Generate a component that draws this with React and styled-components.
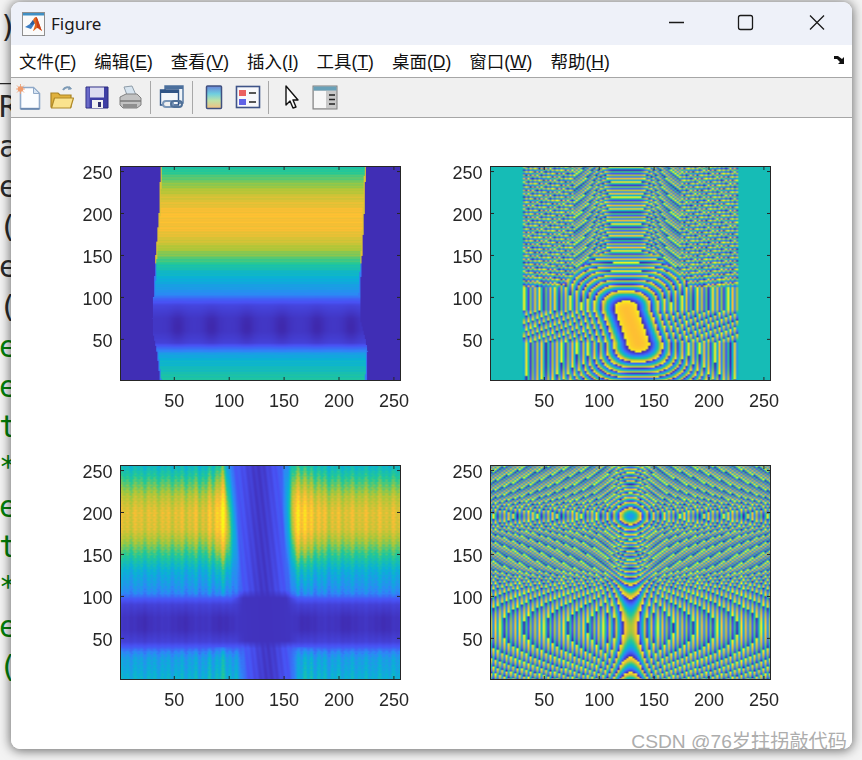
import { useEffect, useRef } from "react";
import styled, { createGlobalStyle } from "styled-components";

const GlobalStyle = createGlobalStyle`
  html, body {
    margin: 0;
    padding: 0;
    background: #f3f3f3;
  }
`;

const Desktop = styled.div`
  position: relative;
  width: 862px;
  height: 760px;
  overflow: hidden;
  background: #f3f3f3;
`;

const CodeBehind = styled.div`
  padding-top: 7px;
  margin-left: -1px;
  font-family: "DejaVu Sans Mono", monospace;
  font-size: 30px;
  line-height: 40px;
`;

const CodeLine = styled.div`
  height: 40px;
  color: ${(p) => (p.$comment ? "#028009" : "#2a2a2a")};
`;

const Window = styled.div`
  position: absolute;
  left: 11px;
  top: 2px;
  width: 841px;
  height: 747px;
  display: flex;
  flex-direction: column;
  border-radius: 9px;
  overflow: hidden;
  background: #fff;
  box-shadow: 0 1px 11px 1px rgba(0, 0, 0, 0.55);
`;

const TitleBar = styled.div`
  height: 43px;
  flex: none;
  display: flex;
  align-items: center;
  background: #eef1f9;
  padding-left: 11px;
`;

const Title = styled.span`
  margin-left: 6px;
  font-family: "Noto Sans", sans-serif;
  font-size: 17px;
  color: #1a1a1a;
`;

const WindowButtons = styled.div`
  margin-left: auto;
  display: flex;
`;

const WindowButton = styled.svg`
  width: 71px;
  height: 43px;
  display: block;
  fill: none;
  stroke: #1a1a1a;
  stroke-width: 1.3;
`;

const MenuBar = styled.div`
  height: 33px;
  flex: none;
  box-sizing: border-box;
  display: flex;
  align-items: center;
  gap: 18px;
  padding: 0 6px 2px 8px;
  background: #fff;
  border-bottom: 1px solid #a6a6a6;
  font-family: "Liberation Sans", "Noto Sans CJK SC", sans-serif;
  font-size: 17.5px;
  color: #111;
`;

const MenuItem = styled.span`
  white-space: nowrap;
`;

const DockArrow = styled.svg`
  margin-left: auto;
  width: 12px;
  height: 10px;
`;

const Toolbar = styled.div`
  height: 40px;
  flex: none;
  box-sizing: border-box;
  display: flex;
  align-items: center;
  background: #f0f0f0;
  border-bottom: 1px solid #a6a6a6;
  padding-left: 1px;
`;

const ToolButton = styled.div`
  width: ${(p) => p.$w || 34}px;
  display: flex;
  justify-content: center;
`;

const ToolIcon = styled.svg`
  width: 26px;
  height: 27px;
  display: block;
`;

const ToolSep = styled.div`
  width: 1px;
  height: 33px;
  background: #a8a8a8;
  margin: 0 ${(p) => p.$r || 4}px 0 ${(p) => p.$l || 2}px;
`;

const FigureArea = styled.div`
  flex: 1;
  display: grid;
  grid-template-columns: 281px 281px;
  grid-template-rows: 215px 215px;
  column-gap: 89px;
  row-gap: 84px;
  padding: 48px 0 0 109px;
  background: #fff;
`;

const Plot = styled.div`
  position: relative;
  width: 281px;
  height: 215px;
`;

const HeatCanvas = styled.canvas`
  width: 281px;
  height: 215px;
  display: block;
`;

const AxesOverlay = styled.svg`
  position: absolute;
  left: 0;
  top: 0;
  overflow: visible;
  font-family: "Liberation Sans", Arial, sans-serif;
  font-size: 18px;
  fill: #262626;
`;

const Watermark = styled.div`
  position: absolute;
  right: 15px;
  bottom: 7px;
  font-family: "Liberation Sans", "Noto Sans CJK SC", sans-serif;
  font-size: 19.2px;
  line-height: 22px;
  color: #adadad;
  white-space: nowrap;
`;

// parula colormap stops
const PARULA = [
  [62, 38, 168],
  [72, 82, 244],
  [46, 135, 247],
  [10, 177, 214],
  [35, 200, 151],
  [171, 199, 57],
  [254, 190, 52],
  [249, 251, 21],
];

function parula(t) {
  const v = Math.min(0.9999, Math.max(0, t)) * (PARULA.length - 1);
  const i = Math.floor(v);
  const f = v - i;
  return PARULA[i].map((c, k) => c + (PARULA[i + 1][k] - c) * f);
}

function lerpTable(table, x) {
  if (x <= table[0][0]) return table[0][1];
  for (let i = 1; i < table.length; i++) {
    if (x <= table[i][0]) {
      const [x0, y0] = table[i - 1];
      const [x1, y1] = table[i];
      return y0 + ((y1 - y0) * (x - x0)) / (x1 - x0);
    }
  }
  return table[table.length - 1][1];
}

const gauss = (d, s) => Math.exp(-(d * d) / (2 * s * s));
const wrap = (phi) => phi - Math.floor(phi);
const clamp01 = (v) => Math.max(0, Math.min(1, v));

// phase whose slope grows from 0 and levels off at `slope`, so it never aliases
const chirp = (d, slope, s) => slope * s * Math.log(Math.cosh(d / s));

const PROFILE_A = [
  [1, 0.56], [12, 0.5], [25, 0.44], [33, 0.36], [40, 0.2], [46, 0.09], [60, 0.055], [75, 0.055],
  [90, 0.1], [97, 0.17], [104, 0.3], [115, 0.38], [130, 0.47], [150, 0.66], [165, 0.77], [180, 0.84],
  [200, 0.855], [220, 0.78], [235, 0.68], [256, 0.53],
];

const EDGE_L = [[1, 37], [36, 34], [55, 31], [75, 30], [100, 31], [150, 33], [200, 36], [256, 37.5]];
const EDGE_R = [[1, 225], [36, 226], [50, 224], [75, 219], [100, 219], [150, 221], [200, 223], [256, 224.5]];

// amplitude with dark side bands
function fieldA(x, y) {
  const l = lerpTable(EDGE_L, y);
  const r = lerpTable(EDGE_R, y);
  if (x < l || x > r) return 0.025;
  let v = lerpTable(PROFILE_A, y);
  const stripes = clamp01(v * 3 - 0.2);
  v += stripes * (0.016 * Math.sin(y * 1.9) + 0.01 * Math.sin(y * 0.8 + 1));
  for (const c of [53, 84, 116, 148, 180, 211]) {
    v -= 0.045 * gauss(x - c, 5) * gauss(y - 65, 14);
  }
  const edge = Math.min(x - l, r - x);
  if (edge < 1.2) {
    if (y > 140) v = 0.8;
    else if (y > 100 || y < 40) v = 0.25;
  }
  return v;
}

const PROFILE_C = [
  [1, 0.44], [12, 0.4], [25, 0.37], [33, 0.29], [40, 0.16], [46, 0.09], [60, 0.05], [75, 0.05],
  [90, 0.09], [97, 0.16], [104, 0.29], [115, 0.35], [130, 0.42], [150, 0.58], [165, 0.7], [180, 0.79],
  [200, 0.81], [220, 0.73], [235, 0.62], [256, 0.46],
];

// amplitude with a slanted dark band down the middle
function fieldC(x, y) {
  let v = lerpTable(PROFILE_C, y);
  const lit = clamp01((y - 98) / 6) + clamp01((40 - y) / 6);
  const near = Math.max(gauss(x - 93, 22), gauss(x - 165, 22));
  const envelope = lit * (0.55 + 0.45 * near) + (1 - lit) * 0.08;
  v += envelope * (0.035 * Math.sin((x * 2 * Math.PI) / 13) + 0.05 * Math.sin((x * 2 * Math.PI) / 6.2));
  v += 0.012 * lit * Math.sin(y * 1.9);
  v += 0.018 * lit * Math.sin((y * 2 * Math.PI) / 5.5) * Math.sin((x * 2 * Math.PI) / 5.5);
  const up = clamp01((y - 105) / 50);
  const ridge = 0.13 * gauss(x - 92.5, 4.5) + 0.13 * gauss(x - 165, 4.5) + 0.05 * gauss(x - 178, 3.5);
  v += ridge * (y > 100 ? 0.3 + 0.7 * up : y < 40 ? 0.5 : 0);
  for (const c of [22, 58, 93, 170, 207, 240]) {
    v -= 0.025 * gauss(x - c, 6) * gauss(y - 68, 13);
  }
  const centre = 131 - (y - 128) * 0.04;
  const half = 25 + Math.max(0, y - 128) * 0.012;
  const mask = clamp01((half - Math.abs(x - centre)) / 11 + 0.5);
  const slant = Math.sin(((x + y * 0.09) * 2 * Math.PI) / 5.2);
  const core = 0.19 - 0.13 * gauss(x - centre, 11) + 0.015 * slant;
  const deep = 0.04 + 0.015 * (1 - gauss(x - centre, 22));
  const inBand = clamp01((y - 38) / 9) * clamp01((108 - y) / 10);
  const low = core * (1 - inBand) + deep * inBand;
  return v * (1 - mask) + low * mask;
}

// closed fringes round an S shaped core, teal outside the aperture
function fieldB(x, y) {
  if (x < 31 || x > 226) return 0.5;
  const top = 86;
  const bottom = 46;
  const yc = Math.max(bottom, Math.min(top, y));
  const xs = 124 + ((top - yc) / (top - bottom)) * 11;
  const dx = Math.abs(x - xs);
  const dy = Math.abs(y - yc);
  if (y > 112 + 38 * clamp01((60 - dx) / 30)) {
    // upper half: rows crossed by columns, which reads as a dense check
    const parity = ((x - 1) / 2) % 2;
    const sideways = chirp(Math.max(0, dx - 12), 0.23, 18);
    const rows = chirp(Math.max(0, dy - 5), 0.22, 28);
    return wrap(0.8825 + rows + sideways + (dx > 48 ? 0.25 * parity : 0));
  }
  const far = Math.max(dx, dy);
  const p = 2 + Math.min(far / 30, 3);
  const d = Math.pow(Math.pow(dx, p) + Math.pow(dy, p), 1 / p);
  const inner = Math.min(d, 5);
  return wrap(0.86 + 0.0009 * inner * inner + chirp(Math.max(0, d - 5), 0.22, 28));
}

// slope per cell of the vertical phase in the saddle panel
function saddleSlope(y) {
  if (y <= 105) return -0.005 * ((y - 62) / 2);
  if (y <= 135) return -0.1075 - ((y - 105) / 30) * 0.3125;
  return 0.42 * Math.tanh((y - 195) / 2 / 8);
}

const SADDLE = (() => {
  const table = [];
  let phase = 0;
  for (let y = 0; y <= 256; y += 2) {
    table[y] = phase;
    phase += saddleSlope(y);
  }
  return table;
})();

// vertical fringes low down, concentric diamonds higher up
function fieldD(x, y) {
  return wrap(chirp((x - 128) / 2, 0.45, 8) + SADDLE[y] + 0.23);
}

function Heatmap({ field, cells }) {
  const ref = useRef(null);

  useEffect(() => {
    const ctx = ref.current.getContext("2d");
    const image = ctx.createImageData(cells, cells);
    const step = 256 / cells;
    for (let j = 0; j < cells; j++) {
      for (let i = 0; i < cells; i++) {
        const [r, g, b] = parula(field(i * step + 1, 256 - j * step));
        const at = (j * cells + i) * 4;
        image.data[at] = r;
        image.data[at + 1] = g;
        image.data[at + 2] = b;
        image.data[at + 3] = 255;
      }
    }
    ctx.putImageData(image, 0, 0);
  }, [field, cells]);

  return <HeatCanvas ref={ref} width={cells} height={cells} />;
}

const TICKS = [50, 100, 150, 200, 250];

function Axes({ field, cells }) {
  const px = (v) => 0.5 + ((v - 1) * 280) / 255;
  const py = (v) => 214.5 - ((v - 1) * 214) / 255;
  return (
    <Plot>
      <Heatmap field={field} cells={cells} />
      <AxesOverlay width="281" height="215">
        <rect x="0.5" y="0.5" width="280" height="214" fill="none" stroke="#262626" />
        {TICKS.map((t) => (
          <g key={t}>
            <path d={`M${px(t)} 214V211M${px(t)} 1V4M1 ${py(t)}H4M280 ${py(t)}H277`} stroke="#262626" fill="none" />
            <text x={px(t)} y="240.5" textAnchor="middle">{t}</text>
            <text x="-7.5" y={py(t) + 7.5} textAnchor="end">{t}</text>
          </g>
        ))}
      </AxesOverlay>
    </Plot>
  );
}

const NAV = [
  ["文件", "F"],
  ["编辑", "E"],
  ["查看", "V"],
  ["插入", "I"],
  ["工具", "T"],
  ["桌面", "D"],
  ["窗口", "W"],
  ["帮助", "H"],
];

const CODE = [
  [")", 0], ["_", 0], ["R", 0], ["a", 0], ["e", 0], ["(", 0], ["e", 0], ["(", 0],
  ["e", 1], ["e", 1], ["t", 1], ["*", 1], ["e", 1], ["t", 1], ["*", 1], ["e", 1], ["(", 1],
];

function MatlabLogo() {
  return (
    <svg width="23" height="24" viewBox="0 0 23 24">
      <rect x="0.5" y="0.5" width="22" height="23" fill="#fafafa" stroke="#8f8f8f" />
      <rect x="1" y="1" width="21" height="2.5" fill="#3f8fc4" />
      <path d="M3 15l5-3 3-4 2 3-4 6z" fill="#3b7dc4" />
      <path d="M8 12l3-4 2 3-3 2z" fill="#2f5f9e" />
      <path d="M11 8c1-2 2-3 3-3 1.500 0 3 7 6 14-2-1-3-3-5-3-2 1-3 3-4 3 1-3 2-5 2-7z" fill="#e2661d" />
      <path d="M14 5c1.500 0 3 7 6 14-2-1-3-3-5-3 0-4-1-8-1-11z" fill="#c9401a" />
    </svg>
  );
}

function NewIcon() {
  return (
    <ToolIcon viewBox="0 0 26 27">
      <path d="M4.500 3.500h13l6 6v15H4.500z" fill="#fbfdff" stroke="#8fa9c8" strokeWidth="1.600" />
      <path d="M17.500 3.500v6h6z" fill="#d6e4f3" stroke="#8fa9c8" />
      <path d="M4.500 25h19" stroke="#5f7fa8" strokeWidth="1.500" />
      <circle cx="4.500" cy="5" r="2.800" fill="#ee9a6c" />
      <path d="M4.500 0v10M0 5h9M1 1.500l7 7M8 1.500l-7 7" stroke="#ee9a6c" strokeWidth="0.8" />
    </ToolIcon>
  );
}

function OpenIcon() {
  return (
    <ToolIcon viewBox="0 0 26 27">
      <path d="M13 6c2-3.500 6-3.500 8-1" fill="none" stroke="#7d9ab5" strokeWidth="2" />
      <path d="M19 2l3 3-4 1z" fill="#7d9ab5" />
      <path d="M1 23V9h7l2 2h11v12z" fill="#e0b13d" stroke="#a98324" strokeWidth="1.200" />
      <path d="M1.500 24l3-10h19l-3 10z" fill="#fbe38e" stroke="#b08a28" strokeWidth="1.200" strokeLinejoin="round" />
    </ToolIcon>
  );
}

function SaveIcon() {
  return (
    <ToolIcon viewBox="0 0 26 27">
      <path d="M2 3h22v21H2z" fill="#3f3fa5" stroke="#2a2a7c" />
      <path d="M2.500 3.500h3v20h-3z" fill="#6a6ac8" />
      <path d="M6 3.500h14v10H6z" fill="#dcdcf0" />
      <path d="M8 16h11v8H8z" fill="#f2f2f2" />
      <path d="M14 18h3v5h-3z" fill="#30306f" />
    </ToolIcon>
  );
}

function PrintIcon() {
  return (
    <ToolIcon viewBox="0 0 26 27">
      <path d="M6 3l8-1 4 9H9z" fill="#d7e4ef" stroke="#8e9ca8" />
      <path d="M2 13l6-3h11l4 4v7l-4 3H5l-3-3z" fill="#c2c2c2" stroke="#808080" />
      <path d="M2 17h21" stroke="#7a7a7a" strokeWidth="1.500" />
      <path d="M5 20h14v4H5z" fill="#8f8f8f" />
    </ToolIcon>
  );
}

function LinkIcon() {
  return (
    <ToolIcon viewBox="0 0 26 27">
      <path d="M6 2h18v17H6z" fill="#eef3f8" stroke="#4b6f9c" strokeWidth="1.400" />
      <path d="M6 2h18v3H6z" fill="#4b6f9c" />
      <path d="M1.500 6h18v15h-18z" fill="#f3f6fa" stroke="#2f5486" strokeWidth="1.400" />
      <path d="M1.500 6h18v3h-18z" fill="#2f5486" />
      <rect x="4" y="17" width="10" height="6" rx="3" fill="#f0f0f0" stroke="#7b97b8" strokeWidth="2" />
      <rect x="12" y="17" width="11" height="6" rx="3" fill="none" stroke="#4f7098" strokeWidth="2" />
    </ToolIcon>
  );
}

function ColorbarIcon() {
  return (
    <ToolIcon viewBox="0 0 26 27">
      <defs>
        <linearGradient id="cbar" x1="0" y1="0" x2="0" y2="1">
          <stop offset="0" stopColor="#6a83d8" />
          <stop offset="0.35" stopColor="#6fcfe0" />
          <stop offset="0.65" stopColor="#bfe3a8" />
          <stop offset="1" stopColor="#f4bf80" />
        </linearGradient>
      </defs>
      <rect x="5.500" y="2" width="15" height="22.500" rx="1" fill="url(#cbar)" stroke="#40507f" strokeWidth="1.500" />
    </ToolIcon>
  );
}

function LegendIcon() {
  return (
    <ToolIcon viewBox="0 0 26 27">
      <rect x="1.500" y="2.500" width="23" height="21" fill="#f8f8fb" stroke="#3f5488" strokeWidth="1.600" />
      <rect x="4" y="6" width="7" height="6" fill="#ea5f5f" />
      <rect x="4" y="15" width="7" height="6" fill="#5f62e6" />
      <path d="M14 9h7M14 18h7" stroke="#222" strokeWidth="1.600" />
    </ToolIcon>
  );
}

function CursorIcon() {
  return (
    <ToolIcon viewBox="0 0 26 27">
      <path d="M7 2v19l4-4 3 7 3-1-3-7h5z" fill="#fdfdfd" stroke="#111" strokeWidth="1.400" strokeLinejoin="round" />
    </ToolIcon>
  );
}

function PanelIcon() {
  return (
    <ToolIcon viewBox="0 0 26 27">
      <rect x="1" y="2" width="24" height="23" fill="#c9c9c9" stroke="#7d7d7d" />
      <rect x="1.500" y="2.500" width="23" height="4" fill="#68a0b8" />
      <rect x="2" y="7" width="12" height="17" fill="#f7f7f7" />
      <path d="M17 11h6M17 15.500h6M17 20h6" stroke="#222" strokeWidth="1.700" />
    </ToolIcon>
  );
}

export default function App() {
  return (
    <Desktop>
      <GlobalStyle />
      <CodeBehind>
        {CODE.map(([text, comment], i) => (
          <CodeLine key={i} $comment={comment === 1}>{text}</CodeLine>
        ))}
      </CodeBehind>
      <Window>
        <TitleBar>
          <MatlabLogo />
          <Title>Figure</Title>
          <WindowButtons>
            <WindowButton viewBox="0 0 71 43"><path d="M30 20.500h15" /></WindowButton>
            <WindowButton viewBox="0 0 71 43"><rect x="28.500" y="13.500" width="14" height="14" rx="2" /></WindowButton>
            <WindowButton viewBox="0 0 71 43"><path d="M29 13.500l14 14M43 13.500l-14 14" /></WindowButton>
          </WindowButtons>
        </TitleBar>
        <MenuBar>
          {NAV.map(([label, key]) => (
            <MenuItem key={key}>{label}(<u>{key}</u>)</MenuItem>
          ))}
          <DockArrow viewBox="0 0 12 10">
            <path d="M0 1h4l4 3 2-2v7H4l2-2-3-3H0z" fill="#111" />
          </DockArrow>
        </MenuBar>
        <Toolbar>
          <ToolButton><NewIcon /></ToolButton>
          <ToolButton><OpenIcon /></ToolButton>
          <ToolButton><SaveIcon /></ToolButton>
          <ToolButton><PrintIcon /></ToolButton>
          <ToolSep />
          <ToolButton><LinkIcon /></ToolButton>
          <ToolSep $l={3} />
          <ToolButton><ColorbarIcon /></ToolButton>
          <ToolButton><LegendIcon /></ToolButton>
          <ToolSep $l={3} $r={6} />
          <ToolButton><CursorIcon /></ToolButton>
          <ToolButton $w={32}><PanelIcon /></ToolButton>
        </Toolbar>
        <FigureArea>
          <Axes field={fieldA} cells={256} />
          <Axes field={fieldB} cells={128} />
          <Axes field={fieldC} cells={256} />
          <Axes field={fieldD} cells={128} />
        </FigureArea>
      </Window>
      <Watermark>CSDN @76岁拄拐敲代码</Watermark>
    </Desktop>
  );
}
